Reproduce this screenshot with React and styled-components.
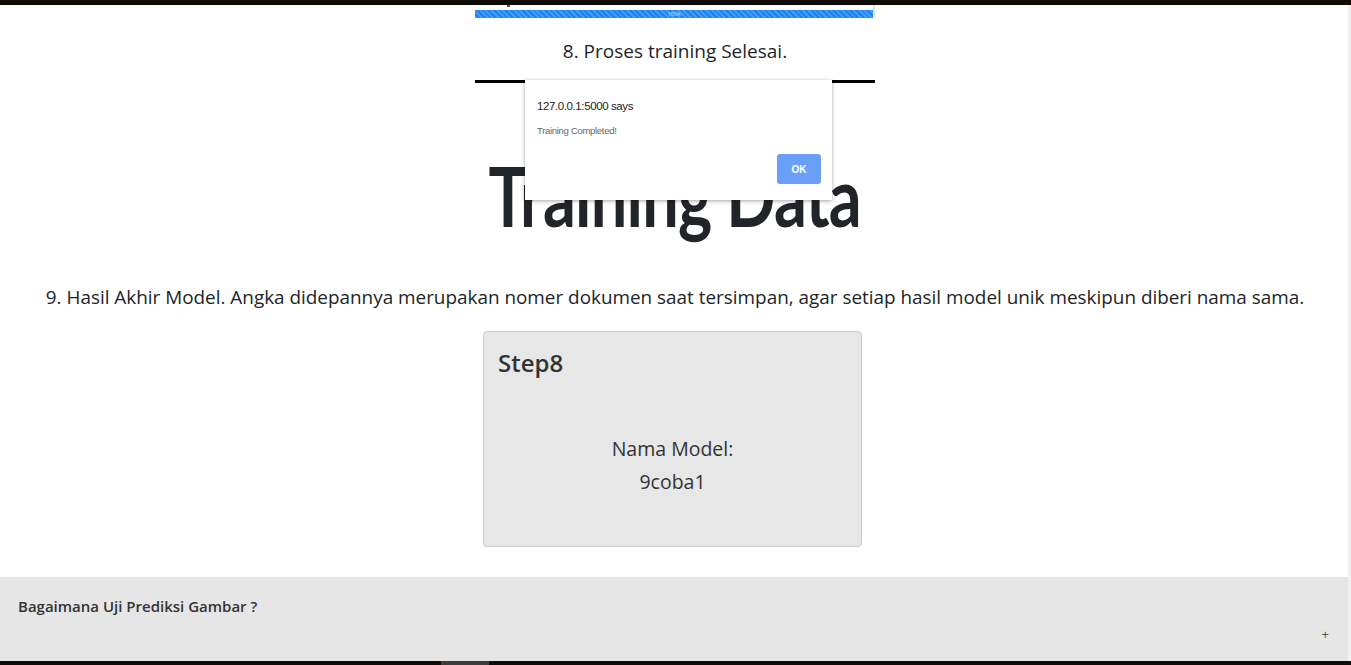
import styled, { createGlobalStyle } from "styled-components"

const Global = createGlobalStyle`
body{
  margin:0;
  font-family:"Open Sans", "Noto Sans", sans-serif;
  color:#212529;
  background:#fff;
}
`

const Frame = styled.div`
width:1351px;
height:665px;
display:flex;
flex-direction:column;
overflow:hidden;
`
const Edge = styled.div`
height:${(p) => p.h}px;
background:#0f0b08;
display:flex;
flex-shrink:0;
`
const EdgeTab = styled.div`
margin-left:441px;
width:48px;
background:#3c3c3c;
`
const Screen = styled.div`
flex:1;
display:flex;
flex-direction:column;
min-height:0;
position:relative;
`
const ScrollTrack = styled.div`
position:absolute;
top:0;
right:0;
bottom:0;
width:3px;
background:#f0f0f0;
`
const Main = styled.main`
flex:1;
padding-right:1px;
display:flex;
flex-direction:column;
align-items:center;
`
const ProgressShot = styled.div`
width:398px;
height:13px;
border-right:2px solid #e2e2e2;
display:flex;
flex-direction:column;
justify-content:flex-end;
position:relative;
`
const Descender = styled.span`
position:absolute;
left:32px;
top:0;
width:3px;
height:2px;
background:#555;
`
const ProgressBar = styled.div`
height:8px;
background-color:#1a84f5;
background-image:repeating-linear-gradient(45deg, rgba(255,255,255,0.18) 0 2px, transparent 2px 4px);
display:flex;
align-items:center;
justify-content:center;
font-size:5px;
color:#cfe3ff;
line-height:1;
`
const Caption = styled.p`
margin:18px 0 0;
font-size:19px;
line-height:30px;
text-align:center;
`
const DialogShot = styled.div`
margin-top:14px;
width:400px;
height:186px;
border-top:3px solid #000;
position:relative;
display:flex;
justify-content:center;
`
const BigTitle = styled.h1`
margin:62px 0 0;
font-family:Lato, "Open Sans", sans-serif;
font-weight:700;
font-size:82px;
line-height:100px;
letter-spacing:-1px;
color:#212529;
transform:scaleX(0.79);
white-space:nowrap;
`
const Alert = styled.div`
position:absolute;
left:50px;
top:-3px;
width:307px;
height:120px;
background:#fff;
box-shadow:0 1px 4px rgba(0,0,0,0.35);
box-sizing:border-box;
padding:18px 11px 0 12px;
display:flex;
flex-direction:column;
font-family:"Liberation Sans", Arial, sans-serif;
`
const AlertTitle = styled.div`
font-size:11.5px;
letter-spacing:-0.4px;
color:#222;
line-height:16px;
`
const AlertText = styled.div`
margin-top:10px;
font-size:9.5px;
letter-spacing:-0.3px;
color:#666;
line-height:14px;
`
const AlertActions = styled.div`
margin-top:16px;
display:flex;
justify-content:flex-end;
`
const OkButton = styled.button`
width:44px;
height:30px;
border:none;
border-radius:3px;
background:#6a9ff8;
color:#fff;
font-family:"Liberation Sans", Arial, sans-serif;
font-size:10px;
font-weight:bold;
padding:0;
`
const Paragraph = styled.p`
margin:13px 0 0;
font-size:18.9px;
line-height:30px;
text-align:center;
`
const Card = styled.div`
margin:19px 5px 0 0;
width:379px;
height:216px;
box-sizing:border-box;
background:#e7e7e7;
border:1px solid #cacaca;
border-radius:4px;
padding:14px 14px;
display:flex;
flex-direction:column;
color:#333;
`
const CardTitle = styled.h3`
margin:0;
font-size:24px;
font-weight:600;
line-height:34px;
color:#333;
`
const CardBody = styled.div`
margin-top:52px;
text-align:center;
font-size:19.5px;
line-height:33px;
`
const Footer = styled.footer`
height:84px;
background:#e6e6e6;
box-sizing:border-box;
padding:18px 22px 0 18px;
display:flex;
flex-direction:column;
flex-shrink:0;
`
const FooterTitle = styled.div`
font-size:15px;
font-weight:600;
color:#333;
line-height:22px;
`
const Toggle = styled.div`
align-self:flex-end;
margin-top:9px;
font-size:13px;
color:#555;
line-height:16px;
`

const App = () => {
  return (
    <Frame>
      <Global />
      <Edge h={5} />
      <Screen>
        <Main>
          <ProgressShot>
            <Descender />
            <ProgressBar>100%</ProgressBar>
          </ProgressShot>
          <Caption>8. Proses training Selesai.</Caption>
          <DialogShot>
            <BigTitle>Training Data</BigTitle>
            <Alert>
              <AlertTitle>127.0.0.1:5000 says</AlertTitle>
              <AlertText>Training Completed!</AlertText>
              <AlertActions>
                <OkButton>OK</OkButton>
              </AlertActions>
            </Alert>
          </DialogShot>
          <Paragraph>
            9. Hasil Akhir Model. Angka didepannya merupakan nomer dokumen saat tersimpan, agar setiap hasil model unik meskipun diberi nama sama.
          </Paragraph>
          <Card>
            <CardTitle>Step8</CardTitle>
            <CardBody>
              Nama Model:
              <br />
              9coba1
            </CardBody>
          </Card>
        </Main>
        <Footer>
          <FooterTitle>Bagaimana Uji Prediksi Gambar ?</FooterTitle>
          <Toggle>+</Toggle>
        </Footer>
        <ScrollTrack />
      </Screen>
      <Edge h={4}>
        <EdgeTab />
      </Edge>
    </Frame>
  )
}

export default App
